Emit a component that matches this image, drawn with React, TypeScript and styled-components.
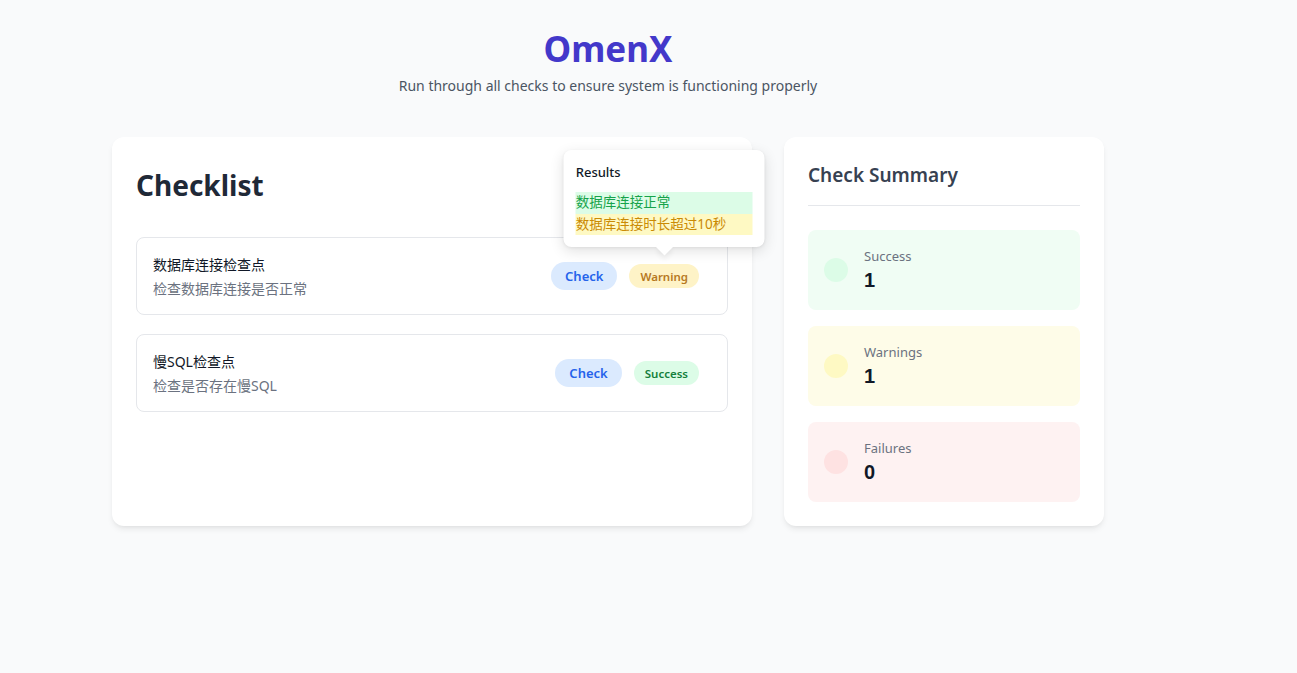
import React from "react";
import styled, { createGlobalStyle } from "styled-components";

const Global = createGlobalStyle`
  * { box-sizing: border-box; }
  html, body { margin: 0; padding: 0; background: #f9fafb; }
  body {
    font-family: "Noto Sans", "Noto Sans CJK SC", sans-serif;
    color: #1f2937;
    -webkit-font-smoothing: antialiased;
  }
`;

const Page = styled.div`
  min-height: 673px;
  padding: 27px 0 40px 112px;
`;

const Container = styled.div`
  width: 992px;
`;

const Header = styled.header`
  display: flex;
  flex-direction: column;
  align-items: center;
  margin-bottom: 41px;
`;

const Title = styled.h1`
  margin: 0;
  font-size: 35px;
  line-height: 44px;
  font-weight: 700;
  color: #4338ca;
`;

const Subtitle = styled.p`
  margin: 5px 0 0;
  font-size: 14px;
  line-height: 20px;
  color: #4b5563;
`;

const Grid = styled.div`
  display: grid;
  grid-template-columns: 640px 320px;
  gap: 32px;
  align-items: stretch;
`;

const Card = styled.section`
  background: #fff;
  border-radius: 12px;
  box-shadow: 0 4px 6px -1px rgba(0, 0, 0, 0.08), 0 2px 4px -2px rgba(0, 0, 0, 0.06);
  padding: 24px;
`;

const CardHeadRow = styled.div`
  display: flex;
  align-items: center;
  height: 48px;
  margin-bottom: 28px;
`;

const BigHeading = styled.h2`
  margin: 0;
  font-size: 28px;
  font-weight: 700;
  color: #1f2937;
  font-family: "Noto Sans", sans-serif;
`;

const List = styled.div`
  display: flex;
  flex-direction: column;
  gap: 19px;
`;

const Item = styled.div`
  display: flex;
  align-items: center;
  justify-content: space-between;
  height: 78px;
  border: 1px solid #e5e7eb;
  border-radius: 8px;
  padding: 0 28px 0 16px;
`;

const ItemText = styled.div`
  display: flex;
  flex-direction: column;
  gap: 3px;
`;

const ItemTitle = styled.div`
  font-size: 14px;
  line-height: 21px;
  color: #111827;
`;

const ItemDesc = styled.div`
  font-size: 14px;
  line-height: 21px;
  color: #6b7280;
`;

const Actions = styled.div`
  display: flex;
  align-items: center;
  gap: 12px;
`;

const CheckButton = styled.button`
  border: none;
  background: #dbeafe;
  color: #2563eb;
  font-family: "Noto Sans", sans-serif;
  font-size: 13px;
  font-weight: 600;
  height: 28px;
  padding: 0 14px;
  border-radius: 999px;
  cursor: pointer;
`;

const Anchor = styled.div`
  position: relative;
  display: flex;
`;

const tones = {
  warning: { bg: "#fef3c7", fg: "#b7791f" },
  success: { bg: "#dcfce7", fg: "#15803d" },
} as const;

const Badge = styled.span<{ $tone: keyof typeof tones }>`
  display: inline-flex;
  align-items: center;
  height: 24px;
  padding: 0 11px;
  border-radius: 999px;
  font-size: 11.5px;
  font-weight: 600;
  background: ${(p) => tones[p.$tone].bg};
  color: ${(p) => tones[p.$tone].fg};
`;

const Popover = styled.div`
  position: absolute;
  bottom: calc(100% + 17px);
  left: 50%;
  transform: translateX(-50%);
  width: 201px;
  background: #fff;
  border-radius: 8px;
  box-shadow: 0 4px 14px rgba(0, 0, 0, 0.12), 0 1px 3px rgba(0, 0, 0, 0.06);
  padding: 12px 12px 12px;
  z-index: 10;
  &::after {
    content: "";
    position: absolute;
    left: 50%;
    bottom: -6px;
    width: 12px;
    height: 12px;
    background: #fff;
    transform: translateX(-50%) rotate(45deg);
    box-shadow: 3px 3px 5px rgba(0, 0, 0, 0.06);
  }
`;

const PopTitle = styled.div`
  font-size: 13px;
  line-height: 21px;
  font-weight: 500;
  color: #111827;
  margin-bottom: 9px;
`;

const lineTones = {
  ok: { bg: "#dcfce7", fg: "#16a34a" },
  warn: { bg: "#fef9c3", fg: "#ca8a04" },
} as const;

const ResultLine = styled.div<{ $tone: keyof typeof lineTones }>`
  font-size: 13.5px;
  line-height: 21.5px;
  background: ${(p) => lineTones[p.$tone].bg};
  color: ${(p) => lineTones[p.$tone].fg};
  white-space: nowrap;
`;

const SummaryHeading = styled.h3`
  margin: 0;
  font-size: 19px;
  line-height: 28px;
  font-weight: 600;
  color: #374151;
  padding-bottom: 16px;
  border-bottom: 1px solid #e5e7eb;
  margin-bottom: 24px;
`;

const Stats = styled.div`
  display: flex;
  flex-direction: column;
  gap: 16px;
`;

const statTones = {
  success: { bg: "#f0fdf4", dot: "#dcfce7" },
  warning: { bg: "#fefce8", dot: "#fef9c3" },
  failure: { bg: "#fef2f2", dot: "#fee2e2" },
} as const;

type StatTone = keyof typeof statTones;

const StatBox = styled.div<{ $tone: StatTone }>`
  display: flex;
  align-items: center;
  gap: 16px;
  height: 80px;
  padding: 0 16px;
  border-radius: 8px;
  background: ${(p) => statTones[p.$tone].bg};
`;

const Dot = styled.span<{ $tone: StatTone }>`
  width: 24px;
  height: 24px;
  border-radius: 50%;
  background: ${(p) => statTones[p.$tone].dot};
  flex-shrink: 0;
`;

const StatText = styled.div`
  display: flex;
  flex-direction: column;
`;

const StatLabel = styled.div`
  font-size: 13px;
  line-height: 20px;
  color: #6b7280;
`;

const StatValue = styled.div`
  font-family: "Liberation Sans", Arial, sans-serif;
  font-size: 20px;
  line-height: 28px;
  font-weight: 700;
  color: #111827;
`;

type Check = {
  title: string;
  desc: string;
  status: "warning" | "success";
  label: string;
  results?: { text: string; tone: "ok" | "warn" }[];
};

const checks: Check[] = [
  {
    title: "数据库连接检查点",
    desc: "检查数据库连接是否正常",
    status: "warning",
    label: "Warning",
    results: [
      { text: "数据库连接正常", tone: "ok" },
      { text: "数据库连接时长超过10秒", tone: "warn" },
    ],
  },
  {
    title: "慢SQL检查点",
    desc: "检查是否存在慢SQL",
    status: "success",
    label: "Success",
  },
];

const stats: { label: string; value: number; tone: StatTone }[] = [
  { label: "Success", value: 1, tone: "success" },
  { label: "Warnings", value: 1, tone: "warning" },
  { label: "Failures", value: 0, tone: "failure" },
];

export default function App() {
  return (
    <Page>
      <Global />
      <Container>
        <Header>
          <Title>OmenX</Title>
          <Subtitle>Run through all checks to ensure system is functioning properly</Subtitle>
        </Header>
        <Grid>
          <Card>
            <CardHeadRow>
              <BigHeading>Checklist</BigHeading>
            </CardHeadRow>
            <List>
              {checks.map((c) => (
                <Item key={c.title}>
                  <ItemText>
                    <ItemTitle>{c.title}</ItemTitle>
                    <ItemDesc>{c.desc}</ItemDesc>
                  </ItemText>
                  <Actions>
                    <CheckButton>Check</CheckButton>
                    <Anchor>
                      <Badge $tone={c.status}>{c.label}</Badge>
                      {c.results && (
                        <Popover>
                          <PopTitle>Results</PopTitle>
                          {c.results.map((r) => (
                            <ResultLine key={r.text} $tone={r.tone}>
                              {r.text}
                            </ResultLine>
                          ))}
                        </Popover>
                      )}
                    </Anchor>
                  </Actions>
                </Item>
              ))}
            </List>
          </Card>
          <Card>
            <SummaryHeading>Check Summary</SummaryHeading>
            <Stats>
              {stats.map((s) => (
                <StatBox key={s.label} $tone={s.tone}>
                  <Dot $tone={s.tone} />
                  <StatText>
                    <StatLabel>{s.label}</StatLabel>
                    <StatValue>{s.value}</StatValue>
                  </StatText>
                </StatBox>
              ))}
            </Stats>
          </Card>
        </Grid>
      </Container>
    </Page>
  );
}
